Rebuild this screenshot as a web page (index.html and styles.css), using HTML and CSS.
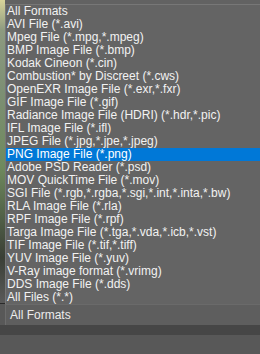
FILE: index.html
```html
<!DOCTYPE html>
<html lang="en">
<head>
    <meta charset="UTF-8">
    <title>Format list</title>
    <link rel="stylesheet" href="styles.css">
</head>
<body>
    <div class="panel">
        <div class="preview">
            <div class="thumb"></div>
        </div>
        <div class="combo">All Formats</div>
        <div class="divider"></div>
        <div class="footer"></div>

        <ul class="format-list">
            <li>All Formats</li>
            <li>AVI File (*.avi)</li>
            <li>Mpeg File (*.mpg,*.mpeg)</li>
            <li>BMP Image File (*.bmp)</li>
            <li>Kodak Cineon (*.cin)</li>
            <li>Combustion* by Discreet (*.cws)</li>
            <li>OpenEXR Image File (*.exr,*.fxr)</li>
            <li>GIF Image File (*.gif)</li>
            <li>Radiance Image File (HDRI) (*.hdr,*.pic)</li>
            <li>IFL Image File (*.ifl)</li>
            <li>JPEG File (*.jpg,*.jpe,*.jpeg)</li>
            <li class="selected">PNG Image File (*.png)</li>
            <li>Adobe PSD Reader (*.psd)</li>
            <li>MOV QuickTime File (*.mov)</li>
            <li>SGI File (*.rgb,*.rgba,*.sgi,*.int,*.inta,*.bw)</li>
            <li>RLA Image File (*.rla)</li>
            <li>RPF Image File (*.rpf)</li>
            <li>Targa Image File (*.tga,*.vda,*.icb,*.vst)</li>
            <li>TIF Image File (*.tif,*.tiff)</li>
            <li>YUV Image File (*.yuv)</li>
            <li>V-Ray image format (*.vrimg)</li>
            <li>DDS Image File (*.dds)</li>
            <li>All Files (*.*)</li>
        </ul>
    </div>
</body>
</html>
```

FILE: styles.css
```css
* {
    margin: 0;
    padding: 0;
    box-sizing: border-box;
}

body {
    width: 260px;
    height: 354px;
    overflow: hidden;
    background: #585858;
    font-family: 'Liberation Sans', Arial, sans-serif;
}

.panel {
    position: relative;
    display: flex;
    flex-direction: column;
    height: 354px;
}

.preview {
    height: 304px;
    background: #626262;
    border-bottom: 1px solid #2a2a2a;
}

.thumb {
    width: 5px;
    height: 100%;
    background: linear-gradient(180deg, #d8d49a 0%, #8d9a80 10%, #7d8f74 30%, #6f8a5e 55%, #3a3f36 85%, #5a5a5a 100%);
}

.combo {
    height: 21px;
    margin-left: 5px;
    padding: 3px 0 0 4px;
    background: #5e5e5e;
    border-left: 1px solid #6c6c6c;
    border-top: 1px solid #6a6a6a;
    color: #ececec;
    font-size: 12px;
}

.divider {
    height: 10px;
    background: #464646;
}

.footer {
    flex: 1;
    background: #585858;
}

.format-list {
    position: absolute;
    top: 4px;
    left: 5px;
    width: 260px;
    list-style: none;
    background: #646464;
    border-left: 1px solid #777;
    border-top: 1px solid #777;
    color: #f2f2f2;
    font-size: 12px;
}

.format-list li {
    height: 13px;
    line-height: 13px;
    padding-left: 1px;
    white-space: nowrap;
}

.format-list li.selected {
    background: #0078d7;
    color: #fff;
}
```
